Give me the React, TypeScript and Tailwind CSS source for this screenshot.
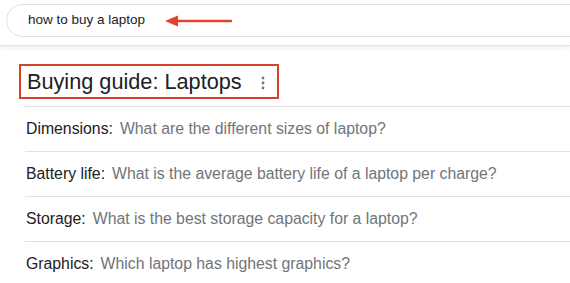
const rows = [
  { label: "Dimensions:", question: "What are the different sizes of laptop?" },
  { label: "Battery life:", question: "What is the average battery life of a laptop per charge?" },
  { label: "Storage:", question: "What is the best storage capacity for a laptop?" },
  { label: "Graphics:", question: "Which laptop has highest graphics?" },
];

function Arrow() {
  return (
    <svg width="68" height="12" viewBox="0 0 68 12" className="ml-[20px] shrink-0">
      <path d="M10 6 H66" stroke="#e2432a" strokeWidth="2.5" strokeLinecap="round" />
      <path d="M0 6 L13 0.5 L13 11.5 Z" fill="#e2432a" />
    </svg>
  );
}

function Kebab() {
  return (
    <svg width="4" height="14" viewBox="0 0 4 14" className="shrink-0 mt-[3px]">
      <circle cx="2" cy="2" r="1.4" fill="#70757a" />
      <circle cx="2" cy="7" r="1.4" fill="#70757a" />
      <circle cx="2" cy="12" r="1.4" fill="#70757a" />
    </svg>
  );
}

export default function App() {
  return (
    <div className="w-[570px] h-[283px] bg-white overflow-hidden font-['Liberation_Sans',Arial,sans-serif]">
      {/* search header */}
      <div className="h-[46px] border-b border-[#e4e4e4] shadow-[0_2px_5px_rgba(0,0,0,0.08)] pt-[4px] pl-[6px]">
        <div className="w-[620px] h-[33px] rounded-full border border-[#dfe1e5] flex items-center pl-[21px]">
          <span className="text-[13.5px] text-[#202124]">how to buy a laptop</span>
          <Arrow />
        </div>
      </div>

      {/* buying guide title */}
      <div className="mt-[18px] ml-[19px] w-[260px] h-[35px] border-2 border-[#d6432b] flex items-center pl-[6px] pr-[12px] justify-between">
        <h2 className="text-[21.7px] text-[#202124] leading-none">Buying guide: Laptops</h2>
        <Kebab />
      </div>

      <div className="mt-[7px] ml-[25px]">
        {rows.map((r) => (
          <div key={r.label} className="h-[45px] border-t border-[#e0e0e0] flex items-center pl-[1px] text-[15.8px]">
            <span className="text-[#202124]">{r.label}</span>
            <span className="ml-[7px] text-[#70757a]">{r.question}</span>
          </div>
        ))}
      </div>
    </div>
  );
}
